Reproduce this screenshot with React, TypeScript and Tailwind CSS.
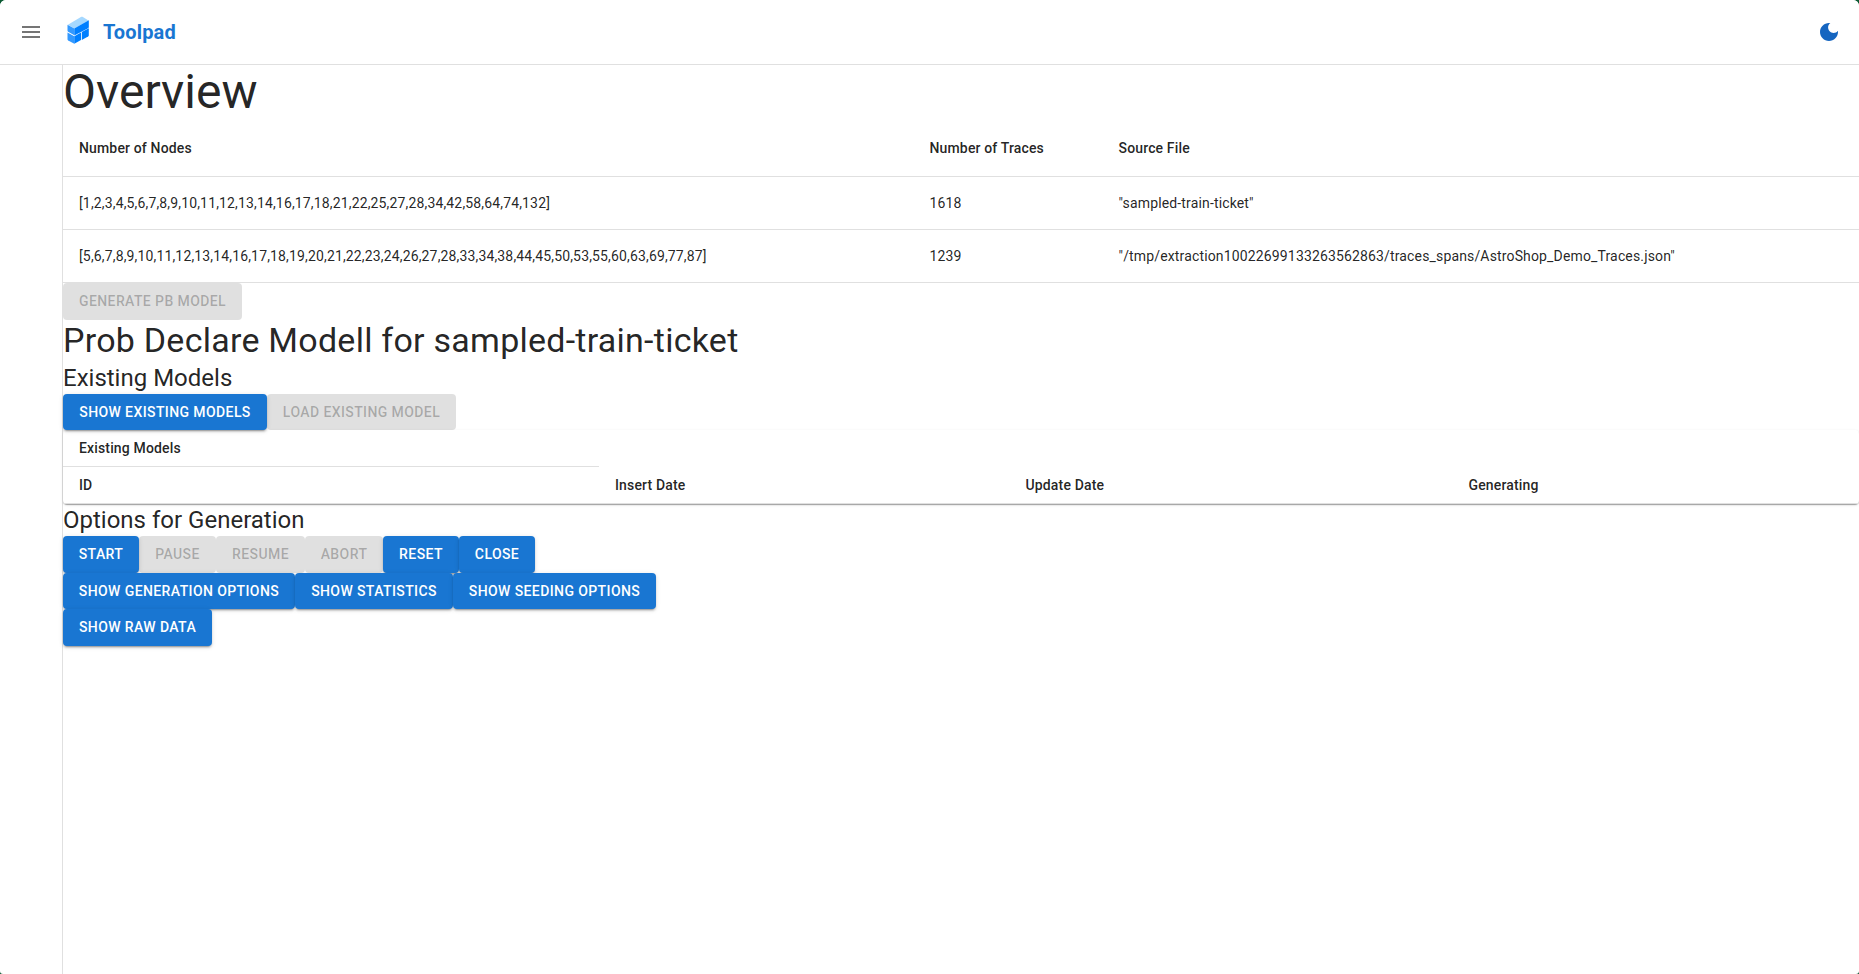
import type { ReactNode } from "react";

function Button({
  children,
  width,
  disabled = false,
}: {
  children: ReactNode;
  width: string;
  disabled?: boolean;
}) {
  return (
    <button
      disabled={disabled}
      className={
        "shrink-0 rounded-[4px] py-1.5 text-center text-[14px] leading-[24.5px] font-medium tracking-[0.02857em] whitespace-nowrap uppercase " +
        width +
        (disabled
          ? " bg-black/12 text-black/26"
          : " bg-[#1976d2] text-white shadow-[0px_3px_1px_-2px_rgba(0,0,0,0.2),0px_2px_2px_0px_rgba(0,0,0,0.14),0px_1px_5px_0px_rgba(0,0,0,0.12)]")
      }
    >
      {children}
    </button>
  );
}

function Logo() {
  return (
    <svg width="40" height="40" viewBox="0 0 40 40" fill="none">
      <path d="M7.900 12.800 20.900 5.100c.7-.4 1.300-.4 2-.1l5.600 3.400-14.100 8.100z" fill="#A5D8FF" />
      <path d="M7.500 12.800 14.300 16.500v6.700L8.200 19.800c-.5-.3-.7-.6-.7-1.200z" fill="#3399FF" />
      <path d="M14.300 16.500 28.800 8.300v6.700c0 .6-.2.900-.7 1.200l-13.800 7.300z" fill="#007FFF" />
      <path d="M7.500 20.500 14.300 24.200v7.600L8.200 28.400c-.5-.3-.7-.6-.7-1.200z" fill="#3399FF" />
      <path d="M14.300 24.200 21 20.600v7.400l-6.700 3.800z" fill="#007FFF" />
      <path d="M21.800 20.100 28.800 16.300v7c0 .6-.2.900-.7 1.200l-6.300 3.500z" fill="#007FFF" />
    </svg>
  );
}

const traces = [
  ["[1,2,3,4,5,6,7,8,9,10,11,12,13,14,16,17,18,21,22,25,27,28,34,42,58,64,74,132]", "1618", '"sampled-train-ticket"'],
  [
    "[5,6,7,8,9,10,11,12,13,14,16,17,18,19,20,21,22,23,24,26,27,28,33,34,38,44,45,50,53,55,60,63,69,77,87]",
    "1239",
    '"/tmp/extraction10022699133263562863/traces_spans/AstroShop_Demo_Traces.json"',
  ],
];

export default function App() {
  return (
    <div className="h-[974px] overflow-hidden bg-[#0b5a33] font-[Roboto,sans-serif] text-black/87">
      <div className="flex h-full flex-col overflow-hidden rounded-t-[6px] rounded-b-[3px] bg-white">
        <header className="z-10 -mb-px flex h-[65px] shrink-0 items-center border-b border-[#e0e0e0] bg-white pr-[18px] pl-[19px]">
          <svg width="24" height="24" viewBox="0 0 24 24" fill="#757575">
            <path d="M3 18h18v-2H3zm0-5h18v-2H3zm0-7v2h18V6z" />
          </svg>
          <div className="ml-[17px]">
            <Logo />
          </div>
          <span className="ml-[3px] text-[20px] leading-8 font-bold tracking-[0.0075em] text-[#1976d2]">Toolpad</span>
          <svg className="ml-auto" width="24" height="24" viewBox="0 0 24 24" fill="#1565c0">
            <path d="M12 3c-4.970 0-9 4.030-9 9s4.030 9 9 9 9-4.030 9-9c0-.46-.04-.92-.1-1.360-.98 1.370-2.580 2.260-4.400 2.260-2.980 0-5.400-2.420-5.400-5.400 0-1.810.89-3.420 2.260-4.400-.44-.06-.9-.1-1.360-.1" />
          </svg>
        </header>

        <div className="flex min-h-0 flex-1">
          <nav className="w-[63px] shrink-0 border-r border-[#e0e0e0]" />
          <main className="min-w-0 flex-1">
            <h3 className="text-[48px] leading-[1.167] font-normal">Overview</h3>
            <table className="w-full table-fixed border-separate border-spacing-0 text-left text-[14px] tracking-[0.01071em]">
              <colgroup>
                <col className="w-[850.5px]" />
                <col className="w-[189px]" />
                <col />
              </colgroup>
              <thead>
                <tr>
                  {["Number of Nodes", "Number of Traces", "Source File"].map((label) => (
                    <th key={label} className="border-b border-[#e0e0e0] p-4 leading-6 font-medium">
                      {label}
                    </th>
                  ))}
                </tr>
              </thead>
              <tbody>
                {traces.map((row) => (
                  <tr key={row[1]}>
                    {row.map((cell) => (
                      <td key={cell} className="border-b border-[#e0e0e0] p-4 leading-[1.43] whitespace-nowrap">
                        {cell}
                      </td>
                    ))}
                  </tr>
                ))}
              </tbody>
            </table>
            <div className="flex">
              <Button width="w-[179px]" disabled>Generate PB Model</Button>
            </div>

            <h4 className="text-[34px] leading-[1.235] font-normal tracking-[0.00735em]">
              Prob Declare Modell for sampled-train-ticket
            </h4>
            <h5 className="text-[24px] leading-[1.334] font-normal">Existing Models</h5>
            <div className="flex">
              <Button width="w-[204px]">Show existing models</Button>
              <Button width="w-[189px]" disabled>Load existing model</Button>
            </div>
            <div className="rounded-[4px] bg-white shadow-[0px_2px_1px_-1px_rgba(0,0,0,0.2),0px_1px_1px_0px_rgba(0,0,0,0.14),0px_1px_3px_0px_rgba(0,0,0,0.12)]">
              <table className="w-full table-fixed border-separate border-spacing-0 text-left text-[14px] leading-6 tracking-[0.01071em]">
                <colgroup>
                  <col className="w-[536px]" />
                  <col className="w-[410.5px]" />
                  <col className="w-[443px]" />
                  <col />
                </colgroup>
                <thead>
                  <tr>
                    <th className="border-b border-[#e0e0e0] px-4 py-1.5 font-medium">Existing Models</th>
                  </tr>
                  <tr>
                    {["ID", "Insert Date", "Update Date", "Generating"].map((label) => (
                      <th key={label} className="border-b border-[#e0e0e0] px-4 py-1.5 font-medium">
                        {label}
                      </th>
                    ))}
                  </tr>
                </thead>
              </table>
            </div>

            <h5 className="text-[24px] leading-[1.334] font-normal">Options for Generation</h5>
            <div className="flex">
              <Button width="w-[76px]">Start</Button>
              <Button width="w-[77px]" disabled>Pause</Button>
              <Button width="w-[89px]" disabled>Resume</Button>
              <Button width="w-[78px]" disabled>Abort</Button>
              <Button width="w-[76px]">Reset</Button>
              <Button width="w-[76px]">Close</Button>
            </div>
            <div className="flex">
              <Button width="w-[232px]">Show generation options</Button>
              <Button width="w-[158px]">Show statistics</Button>
              <Button width="w-[203px]">Show seeding options</Button>
            </div>
            <div className="flex">
              <Button width="w-[149px]">Show raw data</Button>
            </div>
          </main>
        </div>
      </div>
    </div>
  );
}
